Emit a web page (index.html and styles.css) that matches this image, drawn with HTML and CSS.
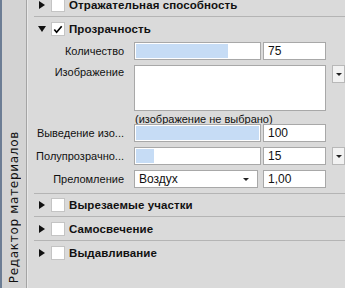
FILE: index.html
```html
<!DOCTYPE html>
<html>
<head>
<meta charset="utf-8">
<link rel="stylesheet" href="styles.css">
</head>
<body>
<div class="app">
  <div class="side"><span class="side-title">Редактор материалов</span></div>
  <div class="main">
    <div class="head sep first"><span class="tri right"></span><span class="cb"></span><span class="htext">Отражательная способность</span></div>
    <div class="head"><span class="tri down"></span><span class="cb checked"><svg viewBox="0 0 13 13" width="13" height="13"><path d="M2.5 6.5 L5 9.5 L10.5 3" fill="none" stroke="#000" stroke-width="1.8"/></svg></span><span class="htext">Прозрачность</span></div>
    <div class="grid">
      <div class="lbl">Количество</div>
      <div class="slider"><div class="fill" style="width:75%"></div></div>
      <div class="num">75</div>
      <div></div>

      <div class="lbl top">Изображение</div>
      <div class="imgbox"></div>
      <div class="btn top"><span class="arr"></span></div>

      <div></div>
      <div class="note">(изображение не выбрано)</div>
      <div></div>

      <div class="lbl">Выведение изо...</div>
      <div class="slider"><div class="fill" style="width:100%"></div></div>
      <div class="num">100</div>
      <div></div>

      <div class="lbl">Полупрозрачно...</div>
      <div class="slider"><div class="fill" style="width:15%"></div></div>
      <div class="num">15</div>
      <div class="btn"><span class="arr"></span></div>

      <div class="lbl">Преломление</div>
      <div class="select">Воздух<span class="arr"></span></div>
      <div class="num">1,00</div>
      <div></div>
    </div>
    <div class="head sep topline"><span class="tri right"></span><span class="cb"></span><span class="htext">Вырезаемые участки</span></div>
    <div class="head sep"><span class="tri right"></span><span class="cb"></span><span class="htext">Самосвечение</span></div>
    <div class="head"><span class="tri right"></span><span class="cb"></span><span class="htext">Выдавливание</span></div>
  </div>
</div>
</body>
</html>
```
FILE: styles.css
```css
html, body {
  margin: 0;
  padding: 0;
}
body {
  width: 345px;
  height: 288px;
  overflow: hidden;
  background: #dadada;
  font-family: "Liberation Sans", Arial, sans-serif;
  font-size: 11px;
  color: #111;
}
.app {
  display: flex;
  height: 288px;
}
.side {
  width: 24px;
  flex: none;
  background: #d3d3d3;
  border-left: 2px solid #6c7d94;
  border-right: 1px solid #a4a4a4;
  display: flex;
  align-items: flex-end;
  justify-content: center;
  padding-bottom: 5px;
  box-sizing: content-box;
}
.side-title {
  writing-mode: vertical-rl;
  transform: rotate(180deg);
  font-family: "DejaVu Sans", Verdana, sans-serif;
  font-size: 12px;
  letter-spacing: 0.7px;
  color: #111;
  white-space: nowrap;
}
.main {
  flex: 1;
  padding-left: 6px;
  margin-top: -7px;
  border-left: 1px solid #e8e8e8;
}
.head {
  display: flex;
  align-items: center;
  height: 24px;
  box-sizing: border-box;
}
.head.sep {
  border-bottom: 1px solid #b4b4b4;
}
.head.topline {
  border-top: 1px solid #b4b4b4;
  margin-top: 5px;
}
.tri {
  width: 0;
  height: 0;
}
.tri.right {
  border-top: 4px solid transparent;
  border-bottom: 4px solid transparent;
  border-left: 6px solid #111;
  margin-left: 5px;
  margin-right: 6px;
}
.tri.down {
  border-left: 4px solid transparent;
  border-right: 4px solid transparent;
  border-top: 6px solid #111;
  margin-left: 4px;
  margin-right: 5px;
}
.cb {
  width: 12px;
  height: 12px;
  background: #fff;
  border: 1px solid #c4c4c4;
  display: flex;
  align-items: center;
  justify-content: center;
  margin-right: 4px;
}
.cb svg {
  display: block;
}
.htext {
  font-family: "Liberation Sans", Arial, sans-serif;
  font-weight: bold;
  font-size: 11.5px;
  letter-spacing: 0.1px;
}
.grid {
  display: grid;
  grid-template-columns: 92px 137px 63px 19px;
  row-gap: 5px;
  align-items: center;
  margin-top: 1px;
}
.grid > .lbl {
  text-align: right;
  padding-right: 2px;
  white-space: nowrap;
  overflow: hidden;
}
.lbl.top {
  align-self: start;
  padding-top: 1px;
}
.slider {
  height: 18px;
  box-sizing: border-box;
  border: 1px solid #a8a8a8;
  background: #fff;
  padding: 1px;
  margin-left: 8px;
  margin-right: 2px;
}
.slider .fill {
  height: 100%;
  background: #c6dcf5;
}
.num {
  height: 18px;
  box-sizing: border-box;
  border: 1px solid #a8a8a8;
  background: #fff;
  padding-left: 4px;
  line-height: 16px;
  font-size: 12px;
}
.imgbox {
  grid-column: 2 / span 2;
  height: 46px;
  box-sizing: border-box;
  border: 1px solid #a8a8a8;
  background: #fff;
  margin-left: 8px;
}
.btn {
  width: 13px;
  height: 18px;
  box-sizing: border-box;
  border: 1px solid #b8b8b8;
  background: #f2f2f2;
  margin-left: 6px;
  display: flex;
  align-items: center;
  justify-content: center;
}
.btn.top {
  align-self: start;
}
.arr {
  width: 0;
  height: 0;
  border-left: 3px solid transparent;
  border-right: 3px solid transparent;
  border-top: 3px solid #222;
}
.note {
  grid-column: 2 / span 2;
  margin-left: 9px;
  margin-top: -3px;
  margin-bottom: -6px;
  white-space: nowrap;
  font-size: 11px;
}
.select {
  height: 18px;
  box-sizing: border-box;
  border: 1px solid #a8a8a8;
  background: #fff;
  margin-left: 8px;
  margin-right: 5px;
  padding-left: 4px;
  line-height: 16px;
  font-size: 12px;
  display: flex;
  justify-content: space-between;
  align-items: center;
  padding-right: 8px;
}
```
